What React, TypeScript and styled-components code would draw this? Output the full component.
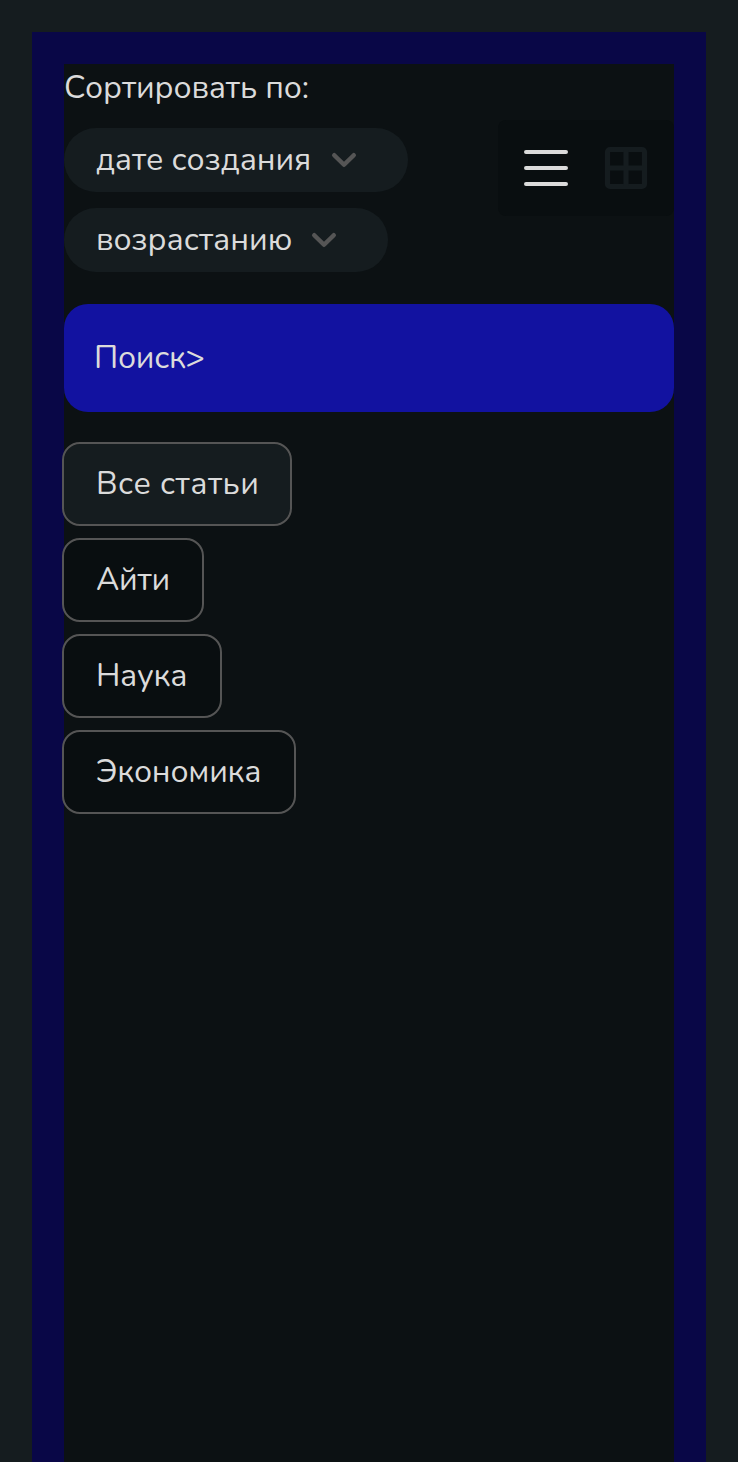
import React from "react";
import styled, { createGlobalStyle } from "styled-components";

const GlobalStyle = createGlobalStyle`
  *, *::before, *::after { box-sizing: border-box; }
  body {
    margin: 0;
    background: #151c1f;
    color: #dbdbdb;
    font-family: Nunito, Lato, "Noto Sans", sans-serif;
    font-size: 32px;
    line-height: 48px;
  }
`;

const Page = styled.div`
  display: flex;
  min-height: 1462px;
  padding: 32px 32px 0;
`;

const Frame = styled.div`
  display: flex;
  flex: 1;
  padding: 32px 32px 0;
  background: #090747;
`;

const Content = styled.main`
  display: flex;
  flex: 1;
  flex-direction: column;
  background: #0c1113;
`;

const Toolbar = styled.header`
  display: flex;
  align-items: center;
  justify-content: space-between;
  height: 208px;
`;

const Sorting = styled.div`
  display: flex;
  flex-direction: column;
  align-items: flex-start;
  gap: 16px;
`;

const Label = styled.span<{ $tracking?: number }>`
  letter-spacing: ${({ $tracking = 0 }) => $tracking}px;
  white-space: nowrap;
`;

const Select = styled.button<{ $width: number }>`
  display: flex;
  align-items: center;
  justify-content: space-between;
  width: ${({ $width }) => $width}px;
  height: 64px;
  padding: 0 48px 0 32px;
  border: 0;
  border-radius: 32px;
  background: #151c1f;
  color: inherit;
  font: inherit;
`;

const ViewSwitch = styled.div`
  display: flex;
  align-items: center;
  justify-content: space-between;
  width: 176px;
  height: 96px;
  padding: 0 24px;
  border-radius: 8px;
  background: #090e10;
`;

const ViewButton = styled.button`
  display: flex;
  padding: 0;
  border: 0;
  background: none;
`;

const Search = styled.div`
  display: flex;
  align-items: center;
  height: 108px;
  margin: 32px 0;
  padding: 0 30px;
  border-radius: 24px;
  background: #1212a0;
`;

const Tags = styled.nav`
  display: flex;
  flex-direction: column;
  align-items: flex-start;
  gap: 16px;
`;

const Tag = styled.button<{ $width: number; $active?: boolean }>`
  display: flex;
  align-items: center;
  width: ${({ $width }) => $width}px;
  height: 80px;
  padding: 0 32px;
  border: 0;
  border-radius: 16px;
  outline: 2px solid #555;
  background: ${({ $active }) => ($active ? "#151c1f" : "#090e10")};
  color: inherit;
  font: inherit;
`;

const Chevron = () => (
  <svg width="32" height="32" viewBox="0 0 32 32" fill="none" stroke="#555" strokeWidth="4.5" strokeLinecap="round" strokeLinejoin="round">
    <path d="M6.25 11.25l9.75 9.5 9.75-9.5" />
  </svg>
);

const ListIcon = () => (
  <svg width="48" height="48" viewBox="0 0 48 48" stroke="#dbdbdb" strokeWidth="4" strokeLinecap="round">
    <path d="M4 8h40M4 24h40M4 40h40" />
  </svg>
);

const GridIcon = () => (
  <svg width="48" height="48" viewBox="0 0 48 48" fill="none" stroke="#151c1f" strokeWidth="5.2">
    <rect x="5.5" y="5.5" width="37" height="37" rx="2.5" />
    <path d="M24 6v36M6 24h36" />
  </svg>
);

const sorts = [
  { text: "дате создания", width: 344, tracking: -0.08 },
  { text: "возрастанию", width: 324, tracking: 0 },
];

const tags = [
  { text: "Все статьи", width: 226, tracking: 0.42 },
  { text: "Айти", width: 138, tracking: -0.25 },
  { text: "Наука", width: 156, tracking: -0.25 },
  { text: "Экономика", width: 230, tracking: -0.22 },
];

export default function App() {
  return (
    <>
      <GlobalStyle />
      <Page>
        <Frame>
          <Content>
            <Toolbar>
              <Sorting>
                <Label $tracking={-0.13}>Сортировать по:</Label>
                {sorts.map((s) => (
                  <Select key={s.text} $width={s.width}>
                    <Label $tracking={s.tracking}>{s.text}</Label>
                    <Chevron />
                  </Select>
                ))}
              </Sorting>
              <ViewSwitch>
                <ViewButton aria-label="Список"><ListIcon /></ViewButton>
                <ViewButton aria-label="Плитка"><GridIcon /></ViewButton>
              </ViewSwitch>
            </Toolbar>
            <Search>
              <Label $tracking={-0.25}>Поиск&gt;</Label>
            </Search>
            <Tags>
              {tags.map((t, i) => (
                <Tag key={t.text} $width={t.width} $active={i === 0}>
                  <Label $tracking={t.tracking}>{t.text}</Label>
                </Tag>
              ))}
            </Tags>
          </Content>
        </Frame>
      </Page>
    </>
  );
}
